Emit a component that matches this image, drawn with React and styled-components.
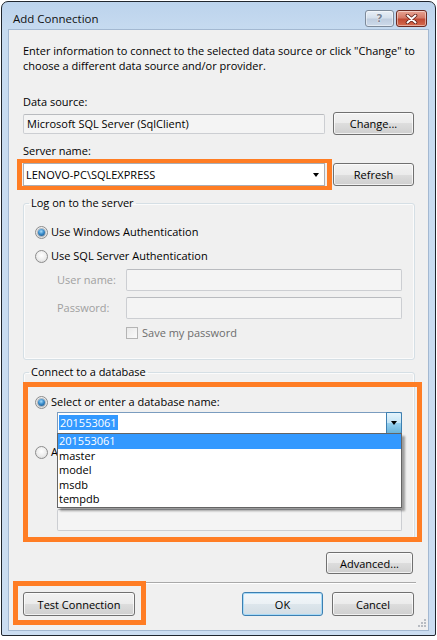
import React from 'react';
import styled, { createGlobalStyle } from 'styled-components';

const Global = createGlobalStyle`
  html, body { margin: 0; padding: 0; background: #ffffff; }
  body {
    font-family: "Open Sans", "Noto Sans", sans-serif;
    font-size: 11px;
    color: #000;
  }
  * { box-sizing: border-box; }
`;

const Window = styled.div`
  margin: 1px 0 0 1px;
  width: 435px;
  height: 635px;
  border: 1px solid #20262e;
  border-radius: 7px 7px 2px 2px;
  background: linear-gradient(#bcd3ec 0px, #c7dbf0 30px, #cbddf1 100%);
  display: flex;
  flex-direction: column;
`;

const TitleBar = styled.div`
  height: 28px;
  flex: none;
  display: flex;
  align-items: flex-start;
  padding: 0 8px 0 11px;
`;

const Title = styled.span`
  margin-top: 10px;
  line-height: 14px;
  font-size: 11.5px;
  color: #111;
  flex: 1;
`;

const CaptionButton = styled.div`
  margin-top: 8px;
  height: 17px;
  width: ${p => p.$w}px;
  margin-left: ${p => p.$ml || 0}px;
  border: 1px solid ${p => (p.$close ? '#6b2a22' : '#7d8a9a')};
  border-radius: 3px;
  background: ${p =>
    p.$close
      ? 'linear-gradient(#e8a493 0%, #d47a68 45%, #c04a34 55%, #d66b4e 100%)'
      : 'linear-gradient(#e8eff7 0%, #d5e0ec 45%, #bfcddf 55%, #cddaea 100%)'};
  box-shadow: inset 0 0 0 1px rgba(255, 255, 255, 0.45);
  display: flex;
  align-items: center;
  justify-content: center;
  font-family: "DejaVu Sans", sans-serif;
  font-weight: bold;
  font-size: 11px;
  color: #7a8696;
  text-shadow: 0 0 1px #fff, 0 0 1px #fff;
`;

const Client = styled.div`
  flex: 1;
  margin: 0 7px 5px 7px;
  background: #f0f0f0;
  box-shadow: 0 0 0 1px #a3b8d1;
  padding: 13px 14px 0 14px;
  display: flex;
  flex-direction: column;
`;

const Intro = styled.div`
  line-height: 15px;
  white-space: nowrap;
`;

const Label = styled.div`
  margin-top: ${p => p.$mt}px;
  line-height: 14px;
  color: ${p => (p.$disabled ? '#a0a0a0' : '#000')};
`;

const Row = styled.div`
  margin-top: ${p => p.$mt || 0}px;
  display: flex;
  align-items: center;
`;

const TextBox = styled.div`
  width: ${p => p.$w}px;
  height: ${p => p.$h || 20}px;
  flex: none;
  border: 1px solid #ccced2;
  border-top-color: #b9bbbf;
  border-radius: 2px;
  background: ${p => (p.$plain ? '#fff' : '#f4f4f4')};
  padding: 0 3px;
  display: flex;
  align-items: center;
  line-height: 14px;
  white-space: nowrap;
`;

const Button = styled.button`
  width: ${p => p.$w}px;
  height: ${p => p.$h || 23}px;
  flex: none;
  margin: 0;
  margin-left: ${p => p.$ml || 0}px;
  padding: 0;
  font: inherit;
  color: #000;
  border: 1px solid ${p => (p.$default ? '#3c7fb1' : '#707070')};
  border-radius: 3px;
  background: ${p =>
    p.$default
      ? 'linear-gradient(#f3f7fa 0%, #ebf1f5 50%, #dde6ec 50%, #d3dde4 100%)'
      : 'linear-gradient(#f2f2f2 0%, #ebebeb 50%, #dddddd 50%, #cfcfcf 100%)'};
  box-shadow: inset 0 0 0 1px ${p => (p.$default ? '#a8daf7' : 'rgba(255,255,255,0.7)')};
`;

const Annotated = styled.div`
  position: relative;
  display: ${p => (p.$block ? 'block' : 'inline-block')};
  margin-top: ${p => p.$mt || 0}px;
`;

const Annotation = styled.div`
  position: absolute;
  pointer-events: none;
  border: solid #ff7d24;
  border-width: ${p => p.$bw};
  inset: ${p => p.$inset};
  z-index: 5;
`;

const Combo = styled.div`
  position: relative;
  width: ${p => p.$w}px;
  height: ${p => p.$h}px;
  border: 1px solid ${p => (p.$active ? '#7a9cbf' : '#abadb3')};
  background: #fff;
  display: flex;
  align-items: center;
  padding-left: ${p => p.$pl}px;
  line-height: 14px;
`;

const ComboText = styled.span`
  flex: 1;
  white-space: nowrap;
`;

const Highlight = styled.span`
  background: #3399ff;
  color: #fff;
  padding: 0 1px;
`;

const ArrowBox = styled.div`
  width: ${p => p.$w}px;
  align-self: stretch;
  display: flex;
  align-items: center;
  justify-content: center;
  ${p =>
    p.$pressed &&
    `
    margin: -1px -1px -1px 0;
    border: 1px solid #3c7fb1;
    border-radius: 0 2px 2px 0;
    background: linear-gradient(#e5f4fc 0%, #c4e5f6 50%, #98d1ef 50%, #68b3db 100%);
  `}
`;

const Arrow = styled.span`
  width: 0;
  height: 0;
  border-left: 3.5px solid transparent;
  border-right: 3.5px solid transparent;
  border-top: 4px solid #000;
`;

const Group = styled.fieldset`
  margin: ${p => p.$mt || 0}px -1px 0 0;
  padding: 0;
  min-width: 0;
  border: 1px solid #d5dfe5;
  border-radius: 3px;
  box-shadow: inset 0 0 0 1px #fbfbfb;
  position: relative;
`;

const Legend = styled.legend`
  margin-left: 5px;
  padding: 0 2px;
  line-height: 14px;
`;

const GroupBody = styled.div`
  padding: ${p => p.$pad};
  display: flex;
  flex-direction: column;
`;

const RadioRow = styled.label`
  margin-top: ${p => p.$mt || 0}px;
  display: flex;
  align-items: center;
  gap: 3px;
  line-height: 14px;
  white-space: nowrap;
`;

const Radio = styled.span`
  width: 13px;
  height: 13px;
  flex: none;
  border-radius: 50%;
  border: 1px solid #8c8c8c;
  background: radial-gradient(circle at 50% 40%, #ffffff 0%, #ececec 55%, #d2d2d2 100%);
  display: flex;
  align-items: center;
  justify-content: center;
  &::after {
    content: '';
    display: ${p => (p.$checked ? 'block' : 'none')};
    width: 7px;
    height: 7px;
    border-radius: 50%;
    background: radial-gradient(circle at 45% 35%, #a6dcfa 0%, #3a8ccb 45%, #17456f 100%);
    box-shadow: 0 0 0 1px rgba(60, 80, 100, 0.35);
  }
`;

const Indent = styled.div`
  padding-left: ${p => p.$pl}px;
  margin-top: ${p => p.$mt || 0}px;
  height: ${p => (p.$h ? `${p.$h}px` : 'auto')};
  display: flex;
  align-items: center;
`;

const FieldLabel = styled.span`
  width: 69px;
  flex: none;
  color: #a0a0a0;
  line-height: 14px;
  white-space: nowrap;
`;

const CheckRow = styled.div`
  margin-top: ${p => p.$mt}px;
  padding-left: 91px;
  display: flex;
  align-items: center;
  gap: 4px;
  line-height: 14px;
  color: #6d6d6d;
`;

const CheckBox = styled.span`
  width: 12px;
  height: 12px;
  border: 1px solid #b4b4b4;
  background: linear-gradient(135deg, #e9e9e9, #fafafa);
`;

const List = styled.div`
  position: absolute;
  top: 100%;
  left: -1px;
  width: 345px;
  background: #fff;
  border: 1px solid #646464;
  box-shadow: 3px 3px 2px rgba(0, 0, 0, 0.35);
  z-index: 3;
`;

const ListItem = styled.div`
  height: 14.5px;
  line-height: 14.5px;
  padding-left: 1px;
  background: ${p => (p.$selected ? '#3399ff' : 'transparent')};
  color: ${p => (p.$selected ? '#fff' : '#000')};
`;

const RightRow = styled.div`
  margin-top: ${p => p.$mt}px;
  display: flex;
  justify-content: flex-end;
  padding-right: 1px;
`;

const Separator = styled.div`
  margin-top: 8px;
  margin-right: -2px;
  height: 1px;
  background: #a9a9a9;
  box-shadow: 0 1px 0 #ffffff;
`;

const Footer = styled.div`
  margin-top: 9px;
  display: flex;
  align-items: center;
`;

const Grip = styled.div`
  margin-top: auto;
  align-self: flex-end;
  margin-right: -13px;
  margin-bottom: 2px;
  line-height: 0;
`;

const dbs = ['201553061', 'master', 'model', 'msdb', 'tempdb'];

export default function App() {
  return (
    <>
      <Global />
      <Window>
        <TitleBar>
          <Title>Add Connection</Title>
          <CaptionButton $w={29}>?</CaptionButton>
          <CaptionButton $w={31} $ml={2} $close>
            <svg width="13" height="10" viewBox="0 0 13 10">
              <path d="M2.5 1.5 L10.5 8.5 M10.5 1.5 L2.5 8.5" stroke="#5a1a12" strokeWidth="3.6" strokeLinecap="round" />
              <path d="M2.5 1.5 L10.5 8.5 M10.5 1.5 L2.5 8.5" stroke="#ffffff" strokeWidth="2" strokeLinecap="round" />
            </svg>
          </CaptionButton>
        </TitleBar>
        <Client>
          <Intro>
            Enter information to connect to the selected data source or click "Change" to
            <br />
            choose a different data source and/or provider.
          </Intro>

          <Label $mt={22}>Data source:</Label>
          <Row $mt={3}>
            <TextBox $w={302}>Microsoft SQL Server (SqlClient)</TextBox>
            <Button $w={81} $ml={8}>Change...</Button>
          </Row>

          <Label $mt={9}>Server name:</Label>
          <Row $mt={5}>
            <Annotated>
              <Combo $w={302} $h={23} $pl={2}>
                <ComboText>LENOVO-PC\SQLEXPRESS</ComboText>
                <ArrowBox $w={17}><Arrow /></ArrowBox>
              </Combo>
              <Annotation $bw="4px 5px" $inset="-4px -7px -4px -6px" />
            </Annotated>
            <Button $w={81} $ml={8}>Refresh</Button>
          </Row>

          <Group $mt={10}>
            <Legend>Log on to the server</Legend>
            <GroupBody $pad="15px 12px 19px 11px">
              <RadioRow>
                <Radio $checked />
                Use Windows Authentication
              </RadioRow>
              <RadioRow $mt={10}>
                <Radio />
                Use SQL Server Authentication
              </RadioRow>
              <Indent $pl={22} $mt={6}>
                <FieldLabel>User name:</FieldLabel>
                <TextBox $w={276} $h={22} />
              </Indent>
              <Indent $pl={22} $mt={6}>
                <FieldLabel>Password:</FieldLabel>
                <TextBox $w={276} $h={22} />
              </Indent>
              <CheckRow $mt={7}>
                <CheckBox />
                Save my password
              </CheckRow>
            </GroupBody>
          </Group>

          <Annotated $block $mt={5}>
            <Group>
              <Legend>Connect to a database</Legend>
              <GroupBody $pad="16px 12px 7px 11px">
                <RadioRow>
                  <Radio $checked />
                  Select or enter a database name:
                </RadioRow>
                <Indent $pl={22} $mt={3}>
                  <Combo $w={345} $h={22} $pl={1} $active>
                    <ComboText>
                      <Highlight>201553061</Highlight>
                    </ComboText>
                    <ArrowBox $w={16} $pressed><Arrow /></ArrowBox>
                    <List>
                      {dbs.map((d, i) => (
                        <ListItem key={d} $selected={i === 0}>{d}</ListItem>
                      ))}
                    </List>
                  </Combo>
                </Indent>
                <RadioRow $mt={11}>
                  <Radio />
                  Attach a database file:
                </RadioRow>
                <Indent $pl={22} $mt={3}>
                  <TextBox $w={266} $h={22} />
                  <Button $w={75} $h={22} $ml={4}>Browse...</Button>
                </Indent>
                <Indent $pl={22} $mt={5} $h={14}>
                  <FieldLabel>Logical name:</FieldLabel>
                </Indent>
                <Indent $pl={22} $mt={6}>
                  <TextBox $w={345} $h={22} />
                </Indent>
              </GroupBody>
            </Group>
            <Annotation $bw="5px" $inset="17px -8px -3px 0" />
          </Annotated>

          <RightRow $mt={13}>
            <Button $w={87} $h={22}>Advanced...</Button>
          </RightRow>

          <Separator />

          <Footer>
            <Annotated>
              <Button $w={112} $h={24}>Test Connection</Button>
              <Annotation $bw="5px" $inset="-11px -11px -9px -10px" />
            </Annotated>
            <Button $w={81} $h={24} $ml={107} $default>OK</Button>
            <Button $w={82} $h={24} $ml={9}>Cancel</Button>
          </Footer>

          <Grip>
            <svg width="10" height="10" viewBox="0 0 10 10">
              {[[7, 1], [4, 4], [7, 4], [1, 7], [4, 7], [7, 7]].map(([x, y]) => (
                <rect key={`${x}-${y}`} x={x} y={y} width="2" height="2" fill="#b8bcc2" />
              ))}
            </svg>
          </Grip>
        </Client>
      </Window>
    </>
  );
}
